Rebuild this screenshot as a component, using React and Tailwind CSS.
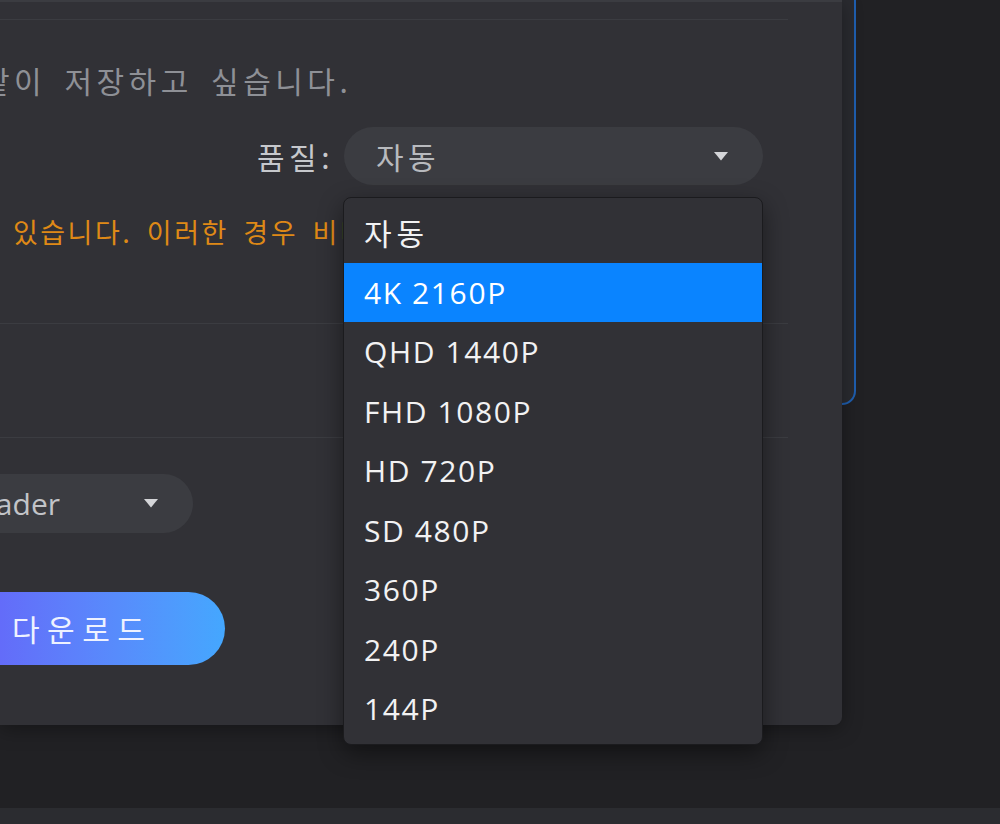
import React from "react";

const KR = { fontFamily: '"Noto Sans CJK KR", "Noto Sans", sans-serif' };

function Caret({ className = "" }) {
  return (
    <svg width="14" height="9" viewBox="0 0 14 9" className={className}>
      <polygon points="0,0 14,0 7,8.5" fill="#d4d5d8" />
    </svg>
  );
}

const items = ["자동", "4K 2160P", "QHD 1440P", "FHD 1080P", "HD 720P", "SD 480P", "360P", "240P", "144P"];

export default function App() {
  return (
    <div
      className="w-[1000px] h-[824px] bg-[#212124] flex flex-col overflow-hidden"
      style={{ fontFamily: '"Open Sans", "Noto Sans CJK KR", sans-serif' }}
    >
      <div className="relative h-[808px]">
        {/* window behind, with blue border */}
        <div className="absolute left-[-200px] top-[-20px] w-[1056px] h-[425px] bg-[#2a2b30] border-2 border-[#1f5fb0] rounded-br-[14px]" />

        {/* main panel */}
        <div className="relative w-[842px] h-[725px] bg-[#313136] border-t-2 border-[#3b3c41] rounded-br-[8px] shadow-[0_4px_20px_rgba(0,0,0,0.35)]">
          <div className="w-[788px] flex flex-col">
            <div className="mt-[17px] h-px bg-[#3b3c41]" />

            <div className="mt-[40px] h-[40px] flex items-center overflow-hidden whitespace-nowrap">
              <span
                className="ml-[-18px] text-[30px] tracking-[4.5px] text-[#8e9096] [word-spacing:7px]"
                style={KR}
              >
                같이 저장하고 싶습니다.
              </span>
            </div>

            <div className="mt-[27px] h-[58px] flex items-center justify-end pr-[25px]">
              <span className="text-[30px] tracking-[4.5px] text-[#c6c8cc] mr-[10px]" style={KR}>
                품질:
              </span>
              <div className="w-[419px] h-[58px] rounded-full bg-[#3b3c41] flex items-center justify-between pl-[32px] pr-[35px]">
                <span className="text-[30px] tracking-[4.5px] text-[#b8babe]" style={KR}>
                  자동
                </span>
                <Caret />
              </div>
            </div>

            <div className="mt-[27px] h-[40px] flex items-center overflow-hidden whitespace-nowrap">
              <span
                className="ml-[-29px] text-[27px] tracking-[2.5px] text-[#df8916] [word-spacing:6px]"
                style={KR}
              >
                수 있습니다. 이러한 경우 비디오를 다시 다운로드하십시오.
              </span>
            </div>

            <div className="mt-[71px] h-px bg-[#3b3c41]" />
            <div className="mt-[113px] h-px bg-[#3b3c41]" />

            <div className="mt-[36px] ml-[-300px] w-[493px] h-[59px] rounded-full bg-[#3b3c41] flex items-center">
              <span className="w-[360px] text-right text-[30px] text-[#c2c4c8] whitespace-nowrap overflow-hidden">
                4K Video Downloader
              </span>
              <Caret className="ml-[84px]" />
            </div>

            <div className="mt-[59px] ml-[-40px] w-[265px] h-[73px] rounded-full bg-gradient-to-r from-[#6660f8] to-[#44a7fe] flex items-center pl-[52px]">
              <span className="text-[30px] tracking-[7.5px] text-[#eef2ff]" style={KR}>
                다운로드
              </span>
            </div>
          </div>

          {/* dropdown list */}
          <div className="absolute left-[343px] top-[195px] w-[420px] h-[548px] bg-[#313136] border border-[#1b1b1e] rounded-[8px] shadow-[0_8px_24px_rgba(0,0,0,0.45)] pt-[5px] overflow-hidden">
            {items.map((it, i) => (
              <div
                key={it}
                className={
                  "h-[59.5px] flex items-center pl-[20px] text-[30px] whitespace-nowrap " +
                  (i === 1 ? "bg-[#0a84ff] text-white" : "text-[#f2f2f3]")
                }
              >
                <span className={i === 0 ? "tracking-[5px]" : "tracking-[1.6px]"} style={i === 0 ? KR : undefined}>
                  {it}
                </span>
              </div>
            ))}
          </div>
        </div>
      </div>
      <div className="h-[16px] bg-[#2b2c30]" />
    </div>
  );
}
